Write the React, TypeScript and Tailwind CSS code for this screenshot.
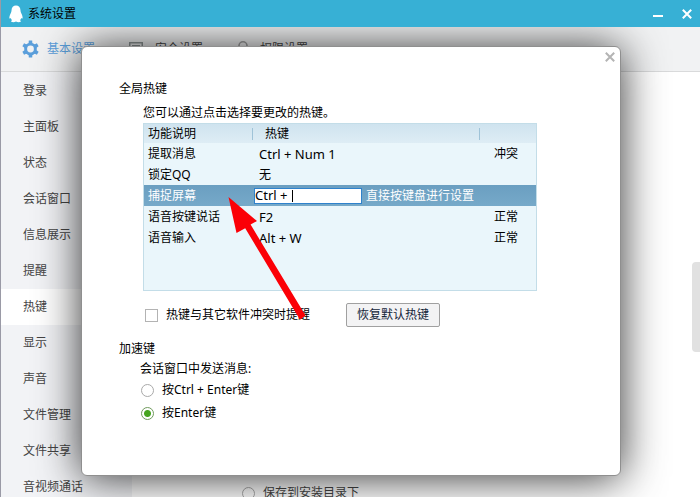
import { useState } from 'react';

interface Hotkey {
  name: string;
  key: string;
  status: string;
}

const SIDEBAR = ['登录', '主面板', '状态', '会话窗口', '信息展示', '提醒', '热键', '显示', '声音', '文件管理', '文件共享', '音视频通话'];

const HOTKEYS: Hotkey[] = [
  { name: '提取消息',     key: 'Ctrl + Num 1', status: '冲突' },
  { name: '锁定QQ',       key: '无',           status: '' },
  { name: '捕捉屏幕',     key: 'Ctrl + ',      status: '' },
  { name: '语音按键说话', key: 'F2',           status: '正常' },
  { name: '语音输入',     key: 'Alt + W',      status: '正常' },
];

const RADIO =
  'size-[13px] shrink-0 appearance-none rounded-full border border-[#a9a9a9] checked:border-[#6f9a5c] checked:bg-[radial-gradient(circle,#46a51f_0_3px,#fff_4px)]';

function PenguinIcon() {
  return (
    <svg width="14" height="18" viewBox="0 0 14 18" fill="#fff" aria-hidden="true">
      <path d="M7 0.5C4.4 0.5 2.6 2.4 2.5 5.4C2.4 7 2 7.6 1.5 8.8C0.7 10.6 0.2 12 0.4 13.3C0.6 13.9 1.2 13.6 1.8 12.9C2 13.9 2.4 14.6 3.1 15.2C2.2 15.6 1.8 16.3 2.4 16.8C3.3 17.4 5.9 17.3 7 16.5C8.1 17.3 10.7 17.4 11.6 16.8C12.2 16.3 11.8 15.6 10.9 15.2C11.6 14.6 12 13.9 12.2 12.9C12.8 13.6 13.4 13.9 13.6 13.3C13.8 12 13.3 10.6 12.5 8.8C12 7.6 11.6 7 11.5 5.4C11.4 2.4 9.6 0.5 7 0.5Z" />
    </svg>
  );
}

function GearIcon() {
  return (
    <svg width="17" height="18" viewBox="0 0 17 18" aria-hidden="true">
      <g fill="#5b9fdb">
        <circle cx="8.5" cy="9" r="6.3" />
        {[0, 60, 120, 180, 240, 300].map((deg) => (
          <path key={deg} d="M6.6 4L6.8 0.6H10.2L10.4 4Z" transform={`rotate(${deg} 8.5 9)`} />
        ))}
      </g>
      <circle cx="8.5" cy="9" r="3.4" fill="#f1f2f3" />
    </svg>
  );
}

function SafeIcon() {
  return (
    <svg width="14" height="14" viewBox="0 0 14 14" fill="none" stroke="#8f9797" aria-hidden="true">
      <rect x="0.75" y="0.75" width="12.5" height="12.5" strokeWidth="1.5" />
      <path d="M3 3.5H11M3.5 6L6.5 9L11 4" />
    </svg>
  );
}

function UserIcon() {
  return (
    <svg width="14" height="16" viewBox="0 0 14 16" fill="none" stroke="#a0a0a0" strokeWidth="1.6" aria-hidden="true">
      <circle cx="7" cy="4.8" r="4" />
      <path d="M1 15C1.4 11.5 3.8 9.6 7 9.6S12.6 11.5 13 15" />
    </svg>
  );
}

function CloseIcon({ color }: { color: string }) {
  return (
    <svg width="10" height="10" viewBox="0 0 10 10" stroke={color} strokeWidth="2" aria-hidden="true">
      <path d="M0.8 0.8L9.2 9.2M9.2 0.8L0.8 9.2" />
    </svg>
  );
}

function PointerArrow() {
  return (
    <svg className="pointer-events-none absolute left-[146px] top-[150px]" width="80" height="126" viewBox="227 197 80 126" aria-hidden="true">
      <path d="M227.5 197L256 221L249.6 224.6L304.5 315.6L299 319.8L244.2 228.2L235.5 233Z" fill="#fb0007" />
    </svg>
  );
}

function HotkeyDialog() {
  const [selected, setSelected] = useState(2);
  const [warn, setWarn] = useState(false);
  const [sendKey, setSendKey] = useState('enter');

  return (
    <section
      role="dialog"
      aria-label="全局热键"
      className="relative w-full rounded-md border border-[#8f8f8f] bg-white pb-[52px] pl-[37px] pr-[83px] pt-8 text-black shadow-[0_2px_44px_rgba(0,0,0,0.8)]"
    >
      <button aria-label="关闭" className="absolute right-1 top-1 p-px">
        <CloseIcon color="#b4b4b4" />
      </button>

      <h2 className="leading-5">全局热键</h2>
      <div className="ml-6">
        <p className="mt-1 leading-5">您可以通过点击选择要更改的热键。</p>

        <div className="h-[168px] border border-[#c3dde8] bg-[#eaf6fb]">
          <table className="w-full table-fixed border-collapse text-left">
            <colgroup>
              <col className="w-[108px]" />
              <col />
              <col className="w-[56px]" />
            </colgroup>
            <thead>
              <tr className="h-[19px] bg-linear-to-b from-[#cfe3ef] to-[#deedf5]">
                <th className="p-0 pl-1 font-normal leading-4">功能说明</th>
                <th className="p-0 font-normal">
                  <span className="block border-x border-[#9fc3d8] pl-3 leading-3">热键</span>
                </th>
                <th className="p-0" aria-label="状态" />
              </tr>
            </thead>
            <tbody>
              {HOTKEYS.map((h, i) => (
                <tr
                  key={h.name}
                  onClick={() => setSelected(i)}
                  className={i === selected ? 'h-[21px] bg-linear-to-b from-[#6b9fc1] to-[#76a9c9] text-white' : 'h-[21px]'}
                >
                  <td className="p-0 pl-1 leading-5">{h.name}</td>
                  {i === selected ? (
                    <td colSpan={2} className="p-0">
                      <div className="flex items-center gap-1 pl-0.5">
                        <span className="relative flex">
                          <input
                            aria-label={h.name}
                            readOnly
                            value={h.key}
                            className="h-4 w-[108px] border border-[#2f82cc] bg-white text-[13px] text-black caret-transparent outline-none"
                          />
                          <span className="absolute left-[38px] top-0.5 h-3 w-px bg-black" />
                        </span>
                        <span className="leading-4">直接按键盘进行设置</span>
                      </div>
                    </td>
                  ) : (
                    <>
                      <td className={h.key === '无' ? 'p-0 pl-[7px] leading-5' : 'p-0 pl-[7px] text-[13px] leading-5'}>{h.key}</td>
                      <td className="p-0 pl-3.5 leading-5">{h.status}</td>
                    </>
                  )}
                </tr>
              ))}
            </tbody>
          </table>
        </div>

        <div className="mt-3 flex h-6 items-center">
          <label className="ml-0.5 flex items-center gap-2">
            <input
              type="checkbox"
              checked={warn}
              onChange={(e) => setWarn(e.target.checked)}
              className="size-[13px] appearance-none border border-[#b3b3b3] bg-white checked:bg-[#46a51f]"
            />
            热键与其它软件冲突时提醒
          </label>
          <button className="ml-9 h-6 rounded-xs border border-[#a0a0a0] bg-[#f3f3f4] px-[10px] text-[#14263a]">
            恢复默认热键
          </button>
        </div>
      </div>

      <h2 className="mt-3 leading-5">加速键</h2>
      <fieldset className="ml-[21px]">
        <legend className="mt-[3px] leading-5">会话窗口中发送消息:</legend>
        <label className="mt-px flex h-5 items-center gap-2 pl-px">
          <input type="radio" name="send" checked={sendKey === 'ctrl'} onChange={() => setSendKey('ctrl')} className={RADIO} />
          按Ctrl + Enter键
        </label>
        <label className="mt-[3px] flex h-5 items-center gap-2 pl-px">
          <input type="radio" name="send" checked={sendKey === 'enter'} onChange={() => setSendKey('enter')} className={RADIO} />
          按Enter键
        </label>
      </fieldset>

      <PointerArrow />
    </section>
  );
}

export default function App() {
  return (
    <div className="relative flex h-screen flex-col overflow-hidden border-l border-[#9a9aa6] bg-white font-['Noto_Sans','Noto_Sans_CJK_SC',sans-serif] text-xs text-[#444]">
      <header className="z-20 flex h-[27px] shrink-0 items-center bg-[#37b0d5] pl-2 pr-2 text-black">
        <PenguinIcon />
        <h1 className="ml-[5px] flex-1 leading-4">系统设置</h1>
        <button aria-label="最小化" className="mr-[19px] flex h-4 items-center pt-1">
          <span className="h-0.5 w-2.5 bg-white" />
        </button>
        <button aria-label="关闭">
          <CloseIcon color="#fff" />
        </button>
      </header>

      <nav className="flex h-[45px] shrink-0 items-center border-b border-[#d9dadb] bg-[#f1f2f3] pl-[21px]">
        <a href="#basic" className="flex w-[107px] items-center gap-2 text-[#5b9fdb]"><GearIcon />基本设置</a>
        <a href="#security" className="flex w-[107px] items-center gap-3"><SafeIcon />安全设置</a>
        <a href="#permission" className="flex items-center gap-2.5"><UserIcon />权限设置</a>
      </nav>

      <div className="flex min-h-0 flex-1">
        <aside className="w-[131px] shrink-0 bg-[#f2f3f6] pt-px">
          {SIDEBAR.map((item) => (
            <a
              key={item}
              href={`#${item}`}
              className={item === '热键' ? 'flex h-9 items-center bg-white pl-[22px]' : 'flex h-9 items-center pl-[22px]'}
            >
              {item}
            </a>
          ))}
        </aside>
        <main className="flex flex-1 items-end pl-[110px]">
          <label className="-mb-1 flex h-4 items-center gap-2">
            <input type="radio" name="folder" className={RADIO} />
            保存到安装目录下
          </label>
        </main>
        <div className="flex w-2 items-start pt-[190px]">
          <div className="h-[90px] w-2 shrink-0 rounded-l bg-[#e1e1e1]" />
        </div>
      </div>

      <div className="absolute inset-x-0 top-0 z-10 pl-20 pr-[79px] pt-[46px]">
        <HotkeyDialog />
      </div>
    </div>
  );
}
